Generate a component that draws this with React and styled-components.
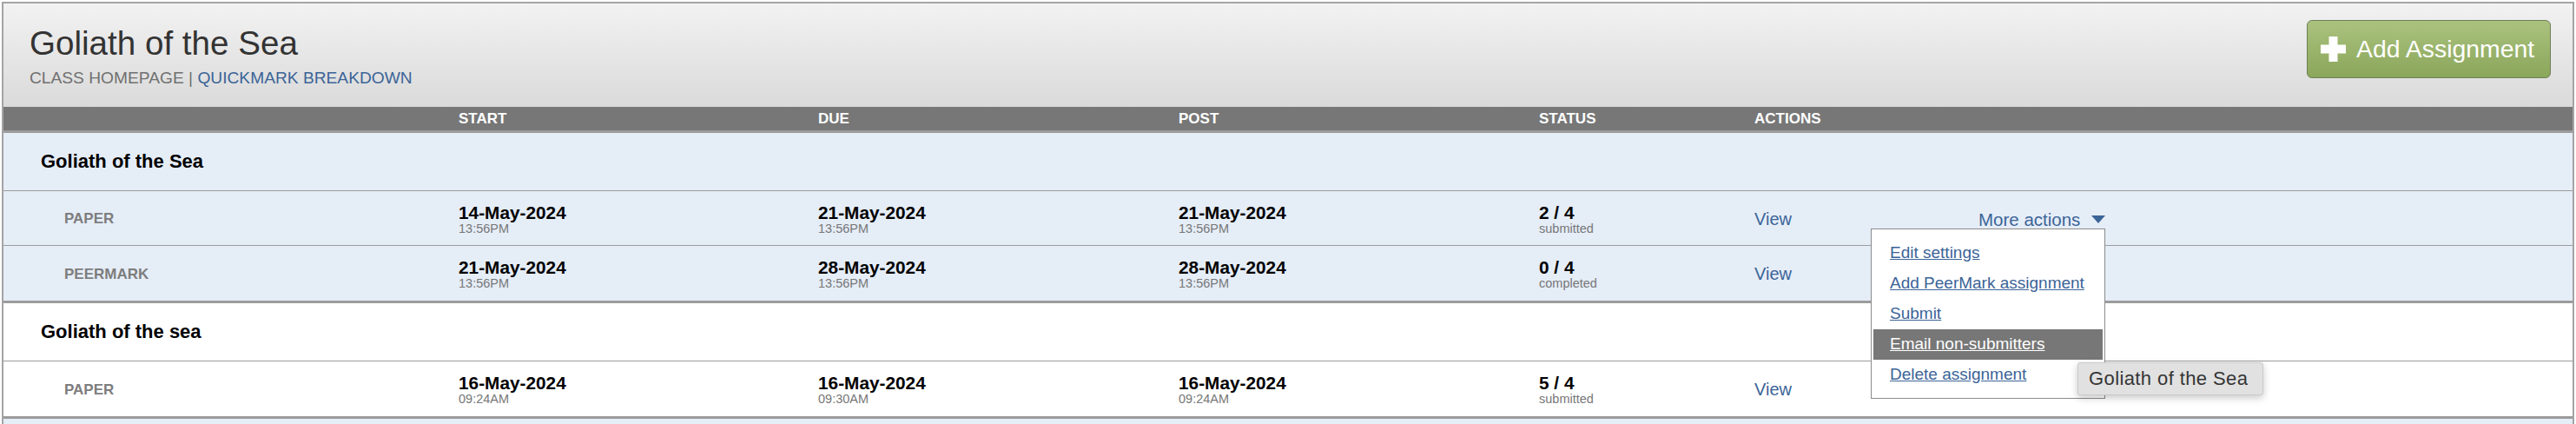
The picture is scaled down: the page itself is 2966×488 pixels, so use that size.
import React from 'react';
import styled, { createGlobalStyle } from 'styled-components';

const GlobalStyle = createGlobalStyle`
  html, body { margin: 0; padding: 0; background: #ffffff; }
  body { font-family: "Liberation Sans", Arial, Helvetica, sans-serif; }
`;

const COLS = '524px 414px 415px 415px 248px 1fr';
const BLUE = '#3b6497';

const Page = styled.div`
  margin: 2px 2px 0 2px;
  border: 2px solid #a4a4a4;
  border-bottom: none;
`;

const Header = styled.header`
  height: 119px;
  box-sizing: border-box;
  background: linear-gradient(#f2f2f2, #dadada);
  display: flex;
  justify-content: space-between;
  align-items: flex-start;
  padding: 19px 25px 0 30px;
`;

const TitleBlock = styled.div`
  display: flex;
  flex-direction: column;
  padding-top: 5px;
`;

const Title = styled.h1`
  margin: 0;
  font-size: 38.6px;
  line-height: 44px;
  font-weight: normal;
  color: #333333;
`;

const Breadcrumb = styled.div`
  margin-top: 7px;
  font-size: 19.2px;
  line-height: 22px;
  color: #707070;
`;

const Crumb = styled.a`
  color: ${p => (p.$active ? BLUE : '#707070')};
  text-decoration: none;
`;

const AddButton = styled.button`
  display: flex;
  align-items: center;
  gap: 12px;
  height: 67px;
  width: 281px;
  box-sizing: border-box;
  padding: 0 16px 0 15px;
  border: 1px solid #6f7f58;
  border-radius: 6px;
  background: linear-gradient(#abc27f, #8aa75a);
  color: #ffffff;
  font-family: "Liberation Sans", Arial, sans-serif;
  font-size: 28.4px;
  white-space: nowrap;
  cursor: pointer;
`;

const Table = styled.div`
  position: relative;
`;

const HeadBar = styled.div`
  display: grid;
  grid-template-columns: ${COLS};
  height: 27px;
  background: #777777;
  border-bottom: 3px solid #9c9c9c;
`;

const HeadLabel = styled.div`
  font-size: 17px;
  line-height: 27px;
  font-weight: bold;
  color: #ffffff;
`;

const Group = styled.section`
  background: ${p => (p.$tint ? '#e5edf7' : '#ffffff')};
  border-bottom: 3px solid #9c9c9c;
`;

const GroupTitle = styled.div`
  height: 67px;
  box-sizing: border-box;
  display: flex;
  align-items: center;
  padding-left: 43px;
  font-size: 22px;
  font-weight: bold;
  color: #000000;
  border-bottom: 1px solid #9c9c9c;
`;

const Row = styled.div`
  display: grid;
  grid-template-columns: ${COLS};
  align-items: center;
  height: ${p => (p.$last ? '63px' : '62px')};
  border-bottom: ${p => (p.$last ? 'none' : '1px solid #9c9c9c')};
`;

const TypeLabel = styled.div`
  padding-left: 70px;
  padding-top: 2px;
  font-size: 17px;
  font-weight: bold;
  color: #7d7d7d;
`;

const Stack = styled.div`
  display: flex;
  flex-direction: column;
  margin-top: 2px;
`;

const Main = styled.span`
  font-size: 20.8px;
  line-height: 22px;
  font-weight: bold;
  color: #000000;
`;

const Sub = styled.span`
  font-size: 14.5px;
  line-height: 15px;
  color: #777777;
`;

const Actions = styled.div`
  display: flex;
  align-items: center;
  padding-top: 2px;
`;

const ViewLink = styled.a`
  width: 258px;
  font-size: 20px;
  line-height: 23px;
  color: ${BLUE};
  text-decoration: none;
`;

const More = styled.div`
  position: relative;
  display: flex;
  align-items: center;
  gap: 13px;
  font-size: 20.5px;
  line-height: 23px;
  color: ${BLUE};
`;

const Menu = styled.ul`
  position: absolute;
  left: -124px;
  top: 22px;
  z-index: 2;
  width: 270px;
  box-sizing: border-box;
  margin: 0;
  padding: 10px 2px 9px;
  list-style: none;
  background: #ffffff;
  border: 1px solid #8c8c8c;
`;

const MenuItem = styled.li`
  height: 35px;
  line-height: 33px;
  padding-left: 19px;
  font-size: 19px;
  white-space: nowrap;
  background: ${p => (p.$hover ? '#777777' : 'transparent')};
  a {
    color: ${p => (p.$hover ? '#ffffff' : BLUE)};
    text-decoration: underline;
  }
`;

const Tooltip = styled.div`
  position: absolute;
  left: 114px;
  top: 176px;
  z-index: 3;
  width: 214px;
  height: 38px;
  box-sizing: border-box;
  padding-left: 12px;
  display: flex;
  align-items: center;
  background: #e1e1e1;
  border: 1px solid #cbcbcb;
  border-radius: 3px;
  box-shadow: 0 3px 8px rgba(0, 0, 0, 0.22);
  font-size: 22px;
  letter-spacing: 0.4px;
  color: #353535;
  white-space: nowrap;
`;

const PlusIcon = () => (
  <svg width="29" height="29" viewBox="0 0 29 29" aria-hidden="true">
    <rect x="9.5" y="0" width="10" height="29" fill="#ffffff" />
    <rect x="0" y="9.5" width="29" height="10" fill="#ffffff" />
  </svg>
);

const Caret = () => (
  <svg width="16" height="9" viewBox="0 0 16 9" aria-hidden="true">
    <polygon points="0,0 16,0 8,9" fill={BLUE} />
  </svg>
);

const DateCell = ({ date, time }) => (
  <Stack>
    <Main>{date}</Main>
    <Sub>{time}</Sub>
  </Stack>
);

const menuItems = [
  'Edit settings',
  'Add PeerMark assignment',
  'Submit',
  'Email non-submitters',
  'Delete assignment',
];

const groups = [
  {
    name: 'Goliath of the Sea',
    tint: true,
    rows: [
      { type: 'PAPER', start: ['14-May-2024', '13:56PM'], due: ['21-May-2024', '13:56PM'], post: ['21-May-2024', '13:56PM'], status: ['2 / 4', 'submitted'], more: true },
      { type: 'PEERMARK', start: ['21-May-2024', '13:56PM'], due: ['28-May-2024', '13:56PM'], post: ['28-May-2024', '13:56PM'], status: ['0 / 4', 'completed'] },
    ],
  },
  {
    name: 'Goliath of the sea',
    tint: false,
    rows: [
      { type: 'PAPER', start: ['16-May-2024', '09:24AM'], due: ['16-May-2024', '09:30AM'], post: ['16-May-2024', '09:24AM'], status: ['5 / 4', 'submitted'] },
    ],
  },
];

export default function App() {
  return (
    <>
      <GlobalStyle />
      <Page>
        <Header>
          <TitleBlock>
            <Title>Goliath of the Sea</Title>
            <Breadcrumb>
              <Crumb>CLASS HOMEPAGE</Crumb> | <Crumb $active>QUICKMARK BREAKDOWN</Crumb>
            </Breadcrumb>
          </TitleBlock>
          <AddButton>
            <PlusIcon />
            Add Assignment
          </AddButton>
        </Header>
        <Table>
          <HeadBar>
            <div />
            <HeadLabel>START</HeadLabel>
            <HeadLabel>DUE</HeadLabel>
            <HeadLabel>POST</HeadLabel>
            <HeadLabel>STATUS</HeadLabel>
            <HeadLabel>ACTIONS</HeadLabel>
          </HeadBar>
          {groups.map(g => (
            <Group key={g.name} $tint={g.tint}>
              <GroupTitle>{g.name}</GroupTitle>
              {g.rows.map((r, i) => (
                <Row key={r.type} $last={i === g.rows.length - 1}>
                  <TypeLabel>{r.type}</TypeLabel>
                  <DateCell date={r.start[0]} time={r.start[1]} />
                  <DateCell date={r.due[0]} time={r.due[1]} />
                  <DateCell date={r.post[0]} time={r.post[1]} />
                  <DateCell date={r.status[0]} time={r.status[1]} />
                  <Actions>
                    <ViewLink>View</ViewLink>
                    {r.more && (
                      <More>
                        <span>More actions</span>
                        <Caret />
                        <Menu>
                          {menuItems.map(m => (
                            <MenuItem key={m} $hover={m === 'Email non-submitters'}>
                              <a>{m}</a>
                            </MenuItem>
                          ))}
                        </Menu>
                        <Tooltip>Goliath of the Sea</Tooltip>
                      </More>
                    )}
                  </Actions>
                </Row>
              ))}
            </Group>
          ))}
          <Group $tint>
            <GroupTitle />
          </Group>
        </Table>
      </Page>
    </>
  );
}
